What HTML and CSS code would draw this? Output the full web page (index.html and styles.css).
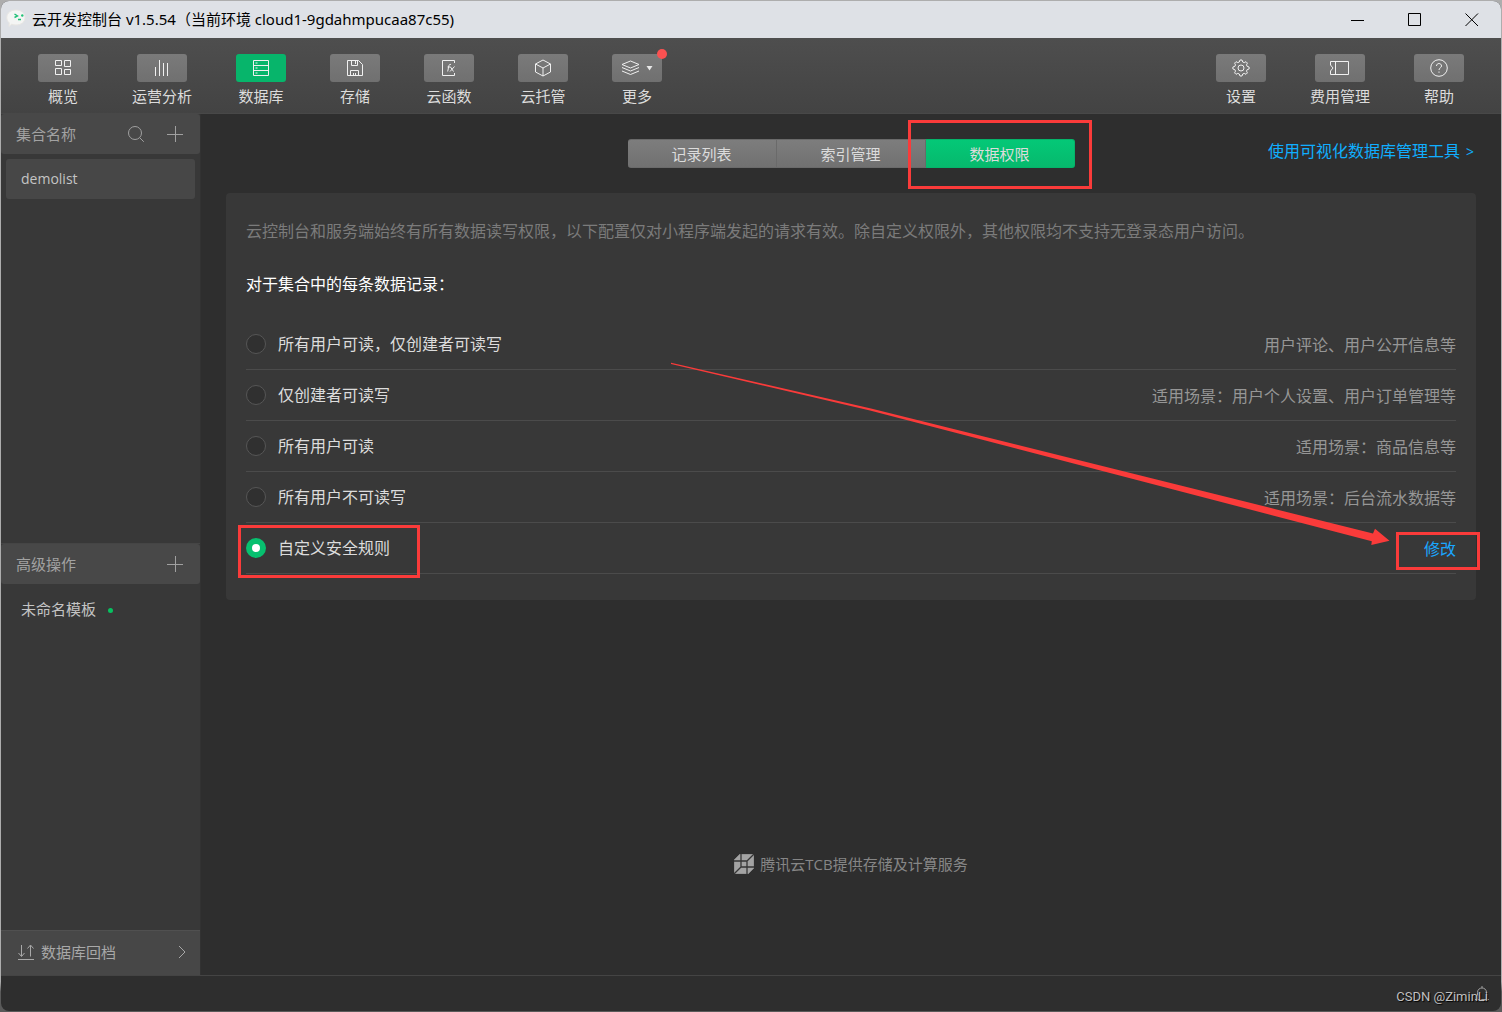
FILE: index.html
```html
<!DOCTYPE html>
<html lang="zh-CN">
<head>
<meta charset="utf-8">
<title>云开发控制台</title>
<link rel="stylesheet" href="styles.css">
</head>
<body>
<div class="window">
  <header class="titlebar">
    <svg class="app-icon" width="20" height="20" viewBox="0 0 20 20"><path d="M10 1c5 0 9 2.800 9 7.500S15 16 10 16c-1.500 0-3-.2-4.300-.8L3 17.500l.2-3.700C1.600 12.500.8 10.700.8 8.500.8 3.800 5 1 10 1z" fill="#f4f5f4" stroke="#e8e6e2"/><path d="M8.500 5l3 2-3 1.500M12 10.500h3" fill="none" stroke="#1fc177" stroke-width="1.400"/><circle cx="16.300" cy="6.500" r="1.200" fill="#1fc177"/></svg>
    <h1 class="window-title">云开发控制台 v1.5.54（当前环境 cloud1-9gdahmpucaa87c55)</h1>
    <div class="window-controls">
      <button type="button" aria-label="最小化"><svg width="14" height="14" viewBox="0 0 14 14"><path d="M0 7.500h13"/></svg></button>
      <button type="button" aria-label="最大化"><svg width="14" height="14" viewBox="0 0 14 14"><path d="M.5.5h12v12H.5z"/></svg></button>
      <button type="button" aria-label="关闭"><svg width="14" height="14" viewBox="0 0 14 14"><path d="M.5.5l12.500 12.500M13 .5L.5 13"/></svg></button>
    </div>
  </header>

  <nav class="toolbar">
    <div class="tool-group">
      <button type="button" class="tool"><span class="tool-icon"><svg width="16" height="16" viewBox="0 0 16 16"><path d="M.5.5h6v5h-6zM9.500.5h6v6h-6zM.5 8.500h6v6h-6zM9.500 9.500h6v5h-6z"/></svg></span>概览</button>
      <button type="button" class="tool"><span class="tool-icon"><svg width="16" height="16" viewBox="0 0 16 16"><path d="M1.500 7v9M5.500 0v16M9.500 3v13M13.500 3v13"/></svg></span>运营分析</button>
      <button type="button" class="tool tool-active"><span class="tool-icon"><svg width="16" height="16" viewBox="0 0 16 16"><path d="M.5.5h15v15H.5zM.5 5.500h15M.5 10.500h15M2.500 3h2M2.500 8h2M2.500 13h2"/></svg></span>数据库</button>
      <button type="button" class="tool"><span class="tool-icon"><svg width="16" height="16" viewBox="0 0 16 16"><path d="M.5.500h11l4 4v11H.5zM4.500.5v5h6v-5M8.500 1v3M3.500 15.500v-5h8v5M6.500 13v2M8.500 13v2"/></svg></span>存储</button>
      <button type="button" class="tool"><span class="tool-icon"><svg width="16" height="16" viewBox="0 0 16 16"><path d="M13.500 3V.5h-12v15h12V13"/><path d="M10 4.500c-1.500-.5-2 .5-2.200 1.500L6.700 11.500M6.500 7h3M9.500 7l3 4.500M13.500 6.500L9 11.500"/></svg></span>云函数</button>
      <button type="button" class="tool"><span class="tool-icon"><svg width="18" height="18" viewBox="0 0 18 18"><path d="M9 1l7.500 4v8L9 17l-7.500-4V5zM1.500 5L9 9l7.500-4M9 9v8"/></svg></span>云托管</button>
      <button type="button" class="tool"><span class="tool-icon"><svg width="36" height="16" viewBox="0 0 36 16"><path d="M3 4.500L11.500 1 20 4.500 11.500 8zM3 7.500l8.500 3.500L20 7.500M3 11l8.500 3.500L20 11"/><path d="M27.500 6h6l-3 4.500z" fill="#e8e8e8" stroke="none"/></svg><i class="tool-dot"></i></span>更多</button>
    </div>
    <div class="tool-group">
      <button type="button" class="tool"><span class="tool-icon"><svg width="18" height="18" viewBox="0 0 18 18"><circle cx="9" cy="9" r="3"/><path d="M7.300 3l.7-2h2l.7 2 1.500.6 1.800-.9 1.400 1.400-.9 1.800.6 1.400 2 .7v2l-2 .7-.6 1.400.9 1.800-1.400 1.400-1.800-.9-1.500.6-.7 2H8l-.7-2-1.500-.6-1.800.9-1.400-1.400.9-1.800-.6-1.400-2-.7V8l2-.7.6-1.400-.9-1.800L4 2.700l1.800.9z"/></svg></span>设置</button>
      <button type="button" class="tool"><span class="tool-icon"><svg width="20" height="16" viewBox="0 0 20 16"><path d="M.5 1.500h18v13H.5V11l2.500-3L.5 5zM5.500 2v12"/></svg></span>费用管理</button>
      <button type="button" class="tool"><span class="tool-icon"><svg width="18" height="18" viewBox="0 0 18 18"><circle cx="9" cy="9" r="8.300"/><path d="M6.500 7c0-3.300 5-3.300 5 0 0 1.800-2.500 1.900-2.500 4M9 12.500v1.300"/></svg></span>帮助</button>
    </div>
  </nav>

  <div class="body">
    <aside class="sidebar">
      <section class="collections">
        <div class="side-head">
          <h2>集合名称</h2>
          <button type="button" class="icon-button" aria-label="搜索"><svg width="18" height="18" viewBox="0 0 18 18"><circle cx="8" cy="8" r="6.500"/><path d="M12.800 12.800l4 4"/></svg></button>
          <button type="button" class="icon-button" aria-label="新建集合"><svg width="18" height="18" viewBox="0 0 18 18"><path d="M1 9.500h16M9.500 1v16"/></svg></button>
        </div>
        <a class="side-item side-item-active" href="#demolist">demolist</a>
      </section>
      <section class="advanced">
        <div class="side-head">
          <h2>高级操作</h2>
          <button type="button" class="icon-button" aria-label="新建模板"><svg width="18" height="18" viewBox="0 0 18 18"><path d="M1 9.500h16M9.500 1v16"/></svg></button>
        </div>
        <a class="side-item side-item-template" href="#template">未命名模板<i class="status-dot"></i></a>
      </section>
      <button type="button" class="rollback">
        <svg width="16" height="18" viewBox="0 0 16 18"><path d="M3.500 2v11M.5 10l3 3.500 3-3.500M12.500 13.500v-11M9.500 5.500l3-3.500 3 3.500M0 16.500h16"/></svg>
        <span>数据库回档</span>
        <svg width="10" height="14" viewBox="0 0 10 14"><path d="M2 1l6 6-6 6"/></svg>
      </button>
    </aside>

    <main class="content">
      <div class="content-head">
        <div class="tabs">
          <button type="button" class="tab">记录列表</button>
          <button type="button" class="tab">索引管理</button>
          <button type="button" class="tab tab-active">数据权限<i class="mark mark-tab"></i></button>
        </div>
        <a class="tool-link" href="#manager">使用可视化数据库管理工具<small>&gt;</small></a>
      </div>

      <section class="panel">
        <p class="hint">云控制台和服务端始终有所有数据读写权限，以下配置仅对小程序端发起的请求有效。除自定义权限外，其他权限均不支持无登录态用户访问。</p>
        <h3 class="question">对于集合中的每条数据记录：</h3>
        <ul class="rules">
          <li><label><input type="radio" name="rule">所有用户可读，仅创建者可读写</label><span>用户评论、用户公开信息等</span></li>
          <li><label><input type="radio" name="rule">仅创建者可读写</label><span>适用场景：用户个人设置、用户订单管理等</span></li>
          <li><label><input type="radio" name="rule">所有用户可读</label><span>适用场景：商品信息等</span></li>
          <li><label><input type="radio" name="rule">所有用户不可读写</label><span>适用场景：后台流水数据等</span></li>
          <li><label><input type="radio" name="rule" checked>自定义安全规则<i class="mark mark-rule"></i></label><a class="edit" href="#edit">修改<i class="mark mark-edit"></i></a></li>
        </ul>
        <svg class="arrow" width="722" height="186" viewBox="0 0 722 186"><path d="M1 .8l200 45.700 502 125 2-4.700 14.500 12L701.300 183l.5-3.800L200 48.500 1 2z" fill="#fa3b3a"/></svg>
      </section>

      <p class="provider"><svg width="20" height="20" viewBox="0 0 20 20"><path d="M6 0h14v14l-6 6H0V6z" fill="#a3a3a3"/><path d="M0 7h13v13M7 0v13h13M0 20l7-7M13 7l7-7" fill="none" stroke="#363636" stroke-width="1.300"/></svg>腾讯云TCB提供存储及计算服务</p>
    </main>
  </div>

  <footer class="statusbar">
    <button type="button" class="icon-button" aria-label="通知"><svg width="14" height="18" viewBox="0 0 14 18"><path d="M2.500 14.500v-7c0-6 9-6 9 0v7M0 14.500h14M7 1v2M5 16.500h4"/></svg></button>
    <span class="credit">CSDN @ZiminLi</span>
  </footer>
</div>
</body>
</html>
```
FILE: styles.css
```css
* { box-sizing: border-box; }

body {
  margin: 0;
  min-height: 100vh;
  padding: 1px;
  display: flex;
  background: linear-gradient(#adadad 97%, #5a5a5a 98%);
  font: 15px/20px "Open Sans", "Noto Sans CJK SC", sans-serif;
  color: #dcdcdc;
}

h1, h2, h3, p, ul { margin: 0; padding: 0; font-size: inherit; font-weight: 400; }
a { color: inherit; text-decoration: none; }
button { padding: 0; border: 0; background: none; color: inherit; font: inherit; }
svg { display: block; fill: none; stroke: currentColor; flex: none; }

.window {
  flex: 1;
  min-width: 0;
  display: flex;
  flex-direction: column;
  border-radius: 8px;
  overflow: hidden;
  background: #2e2e2e;
}

/* Title bar */
.titlebar {
  display: flex;
  align-items: center;
  height: 37px;
  padding: 0 1px 2px 5px;
  background: #dee1e6;
  color: #000;
}
.app-icon { stroke: none; }
.window-title { flex: 1; margin-left: 6px; font-family: "Noto Sans", "Noto Sans CJK SC", sans-serif; font-size: 15px; white-space: nowrap; }
.window-controls { display: flex; }
.window-controls button { width: 57px; height: 35px; padding-top: 2px; display: grid; place-items: center; }

/* Toolbar */
.toolbar {
  display: flex;
  justify-content: space-between;
  height: 76px;
  padding: 16px 37px 0;
  background: linear-gradient(#4e4e4e, #434343);
  border-bottom: 1px solid #484848;
}
.tool-group { display: flex; align-items: flex-start; gap: 44px; }
.tool { min-width: 50px; display: flex; flex-direction: column; align-items: center; gap: 4px; white-space: nowrap; }
.tool-icon {
  position: relative;
  width: 50px;
  height: 28px;
  display: grid;
  place-items: center;
  border-radius: 3px;
  background: linear-gradient(#7a7a7a, #707070);
  color: #f0f0f0;
}
.tool-active .tool-icon { background: #07b56b; }
.tool-dot { position: absolute; top: -5px; right: -5px; width: 10px; height: 10px; border-radius: 50%; background: #fa5151; }

.body { flex: 1; display: flex; }

/* Sidebar */
.sidebar { width: 200px; flex: none; display: flex; flex-direction: column; background: #383838; border-right: 1px solid #323232; }
.collections { flex: 10 1 0; }
.advanced { flex: 9 1 0; border-top: 1px solid #454545; }
.side-head {
  display: flex;
  align-items: center;
  gap: 21px;
  height: 40px;
  padding: 0 16px 0 15px;
  border-radius: 3px;
  background: #484848;
  color: #a2a2a2;
}
.side-head h2 { flex: 1; }
.icon-button { color: #a0a0a0; }
.side-item { display: flex; align-items: center; height: 40px; margin: 5px; padding-left: 15px; border-radius: 3px; font-size: 14px; color: #c4c4c4; }
.side-item-active { background: #474747; }
.side-item-template { font-size: 15px; }
.status-dot { width: 5px; height: 5px; margin: 4px 0 0 12px; border-radius: 50%; background: #07c160; }
.rollback {
  display: flex;
  align-items: center;
  gap: 7px;
  height: 45px;
  padding: 0 13px 2px 17px;
  border-top: 1px solid #505050;
  background: #474747;
  color: #a8a8a8;
}
.rollback span { flex: 1; text-align: left; }

/* Content */
.content { flex: 1; min-width: 0; display: flex; flex-direction: column; padding: 25px 25px 101px; }
.content-head { display: grid; grid-template-columns: 1fr auto 1fr; }
.tabs { grid-column: 2; display: flex; height: 29px; }
.tab {
  position: relative;
  width: 149px;
  border: 1px solid #6a6a6a;
  border-left-width: 0;
  background: linear-gradient(#7d7d7d, #717171);
}
.tab:first-child { border-radius: 3px 0 0 3px; }
.tab-active { border-color: #05b46a; border-radius: 0 3px 3px 0; background: linear-gradient(#04c877, #06b96d); }
.tool-link { justify-self: end; margin-right: 2px; padding-top: 2px; font-size: 16px; color: #10aeff; white-space: nowrap; }
.tool-link small { margin-left: 6px; font-size: 14px; }

.panel { position: relative; margin-top: 25px; padding: 26px 20px; border-radius: 4px; background: #383838; font-size: 16px; line-height: 24px; }
.hint { color: #7b7b7b; }
.question { margin-top: 29px; color: #fff; }
.rules { margin-top: 23px; list-style: none; }
.rules li { display: flex; justify-content: space-between; align-items: center; height: 51px; border-bottom: 1px solid #4b4b4b; }
.rules label { position: relative; display: flex; align-items: center; gap: 12px; color: #dcdcdc; }
.rules span { padding-top: 2px; color: #969696; }
.rules input { appearance: none; width: 20px; height: 20px; margin: 0; border: 1px solid #565656; border-radius: 50%; background: #303030; }
.rules input:checked { border: 6px solid #07c06f; background: #fff; }
.edit { position: relative; padding-top: 2px; color: #1aa6ff; }

/* Red callouts laid over the interface */
.mark { position: absolute; border: 3px solid #fa3b3a; pointer-events: none; }
.mark-tab { inset: -20px -18px -22px; }
.mark-rule { inset: -11px -30px -18px -8px; }
.mark-edit { inset: -3px -24px -9px -28px; }
.arrow { position: absolute; top: 169px; right: 84px; stroke: none; pointer-events: none; }

.provider { display: flex; justify-content: center; align-items: center; gap: 6px; margin-top: auto; color: #868686; }

/* Status bar */
.statusbar { position: relative; display: flex; justify-content: flex-end; align-items: center; height: 36px; padding-right: 12px; border-top: 1px solid #444; }
.credit { position: absolute; right: 13px; bottom: 4px; font: 13px/20px Roboto, sans-serif; color: #c0c0c0; text-shadow: 1px 1px 1px #000; }
```
